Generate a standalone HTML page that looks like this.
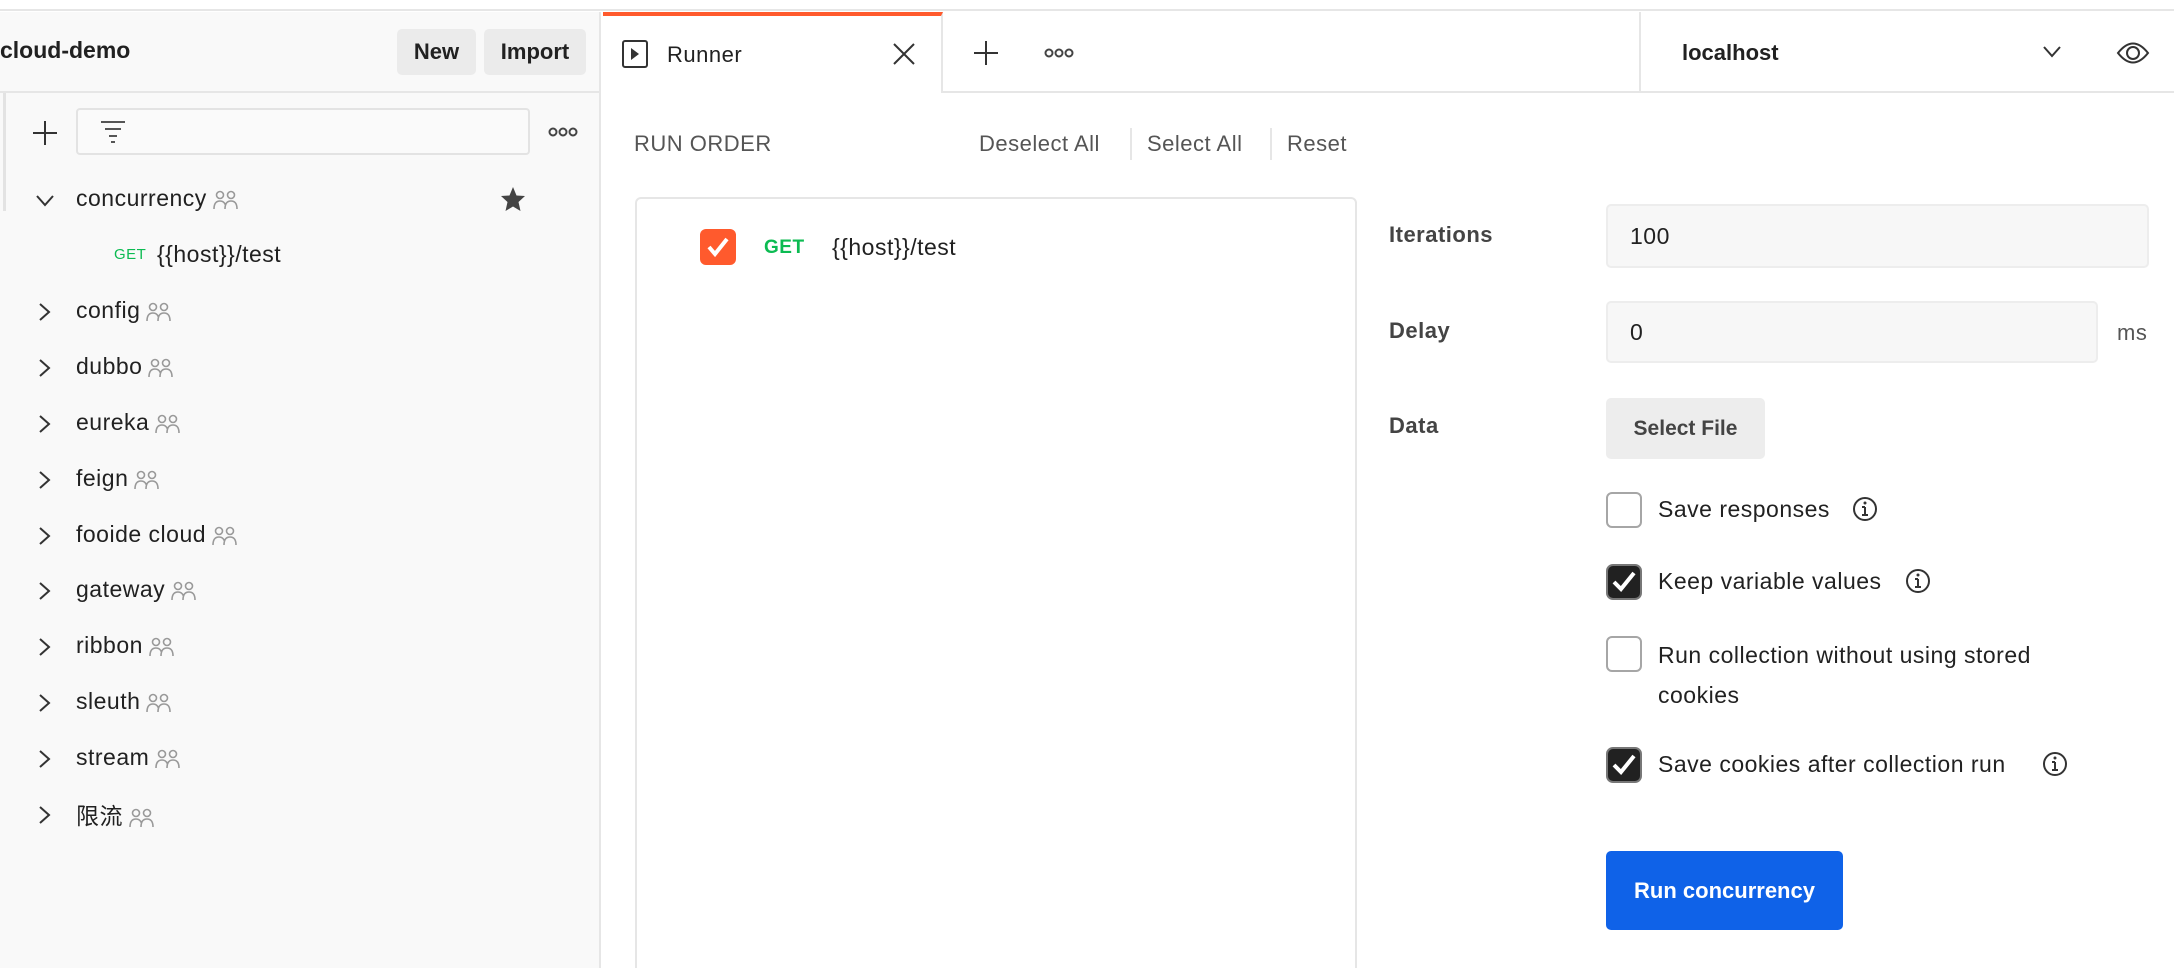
<!DOCTYPE html>
<html><head><meta charset="utf-8"><style>
*{box-sizing:border-box;margin:0;padding:0}
html,body{width:2174px;height:968px;overflow:hidden}
body{background:#fff;font-family:"Liberation Sans","Noto Sans CJK SC",sans-serif;color:#212121;position:relative;letter-spacing:0.5px}
.a{position:absolute}
.t{font-size:23px;white-space:nowrap}
.ppl{display:inline-block;vertical-align:middle;margin-left:6px}
</style></head><body>
<div class="a" style="left:0;top:0;width:2174px;height:11px;background:#fff;border-bottom:2px solid #e6e6e6"></div>
<div class="a" style="left:0;top:12px;width:601px;height:956px;background:#f9f9f9;border-right:2px solid #e6e6e6"></div>
<div class="a" style="left:0;top:91px;width:600px;height:2px;background:#e6e6e6"></div>
<div class="a" style="left:3px;top:93px;width:3px;height:118px;background:#e3e3e3"></div>
<div class="a t" style="left:0;top:37px;font-weight:bold;font-size:23px;letter-spacing:0">cloud-demo</div>
<div class="a" style="left:397px;top:29px;width:79px;height:46px;background:#ebebeb;border-radius:5px;font-weight:bold;font-size:22px;line-height:46px;text-align:center;letter-spacing:0">New</div>
<div class="a" style="left:484px;top:29px;width:102px;height:46px;background:#ebebeb;border-radius:5px;font-weight:bold;font-size:22px;line-height:46px;text-align:center;letter-spacing:0">Import</div>
<svg class="a" style="left:32px;top:120px" width="26" height="26"><path d="M13 1V25M1 13H25" stroke="#333" stroke-width="2"/></svg>
<div class="a" style="left:76px;top:108px;width:454px;height:47px;background:#fafafa;border:2px solid #e3e3e3;border-radius:4px"></div>
<svg class="a" style="left:100px;top:120px" width="26" height="24"><path d="M1 2H25M5 9H21M9 16H17M11 22H15" stroke="#555" stroke-width="2"/></svg>
<svg class="a" style="left:548px;top:126px" width="30" height="12"><g fill="none" stroke="#444" stroke-width="2"><circle cx="5" cy="6" r="3.5"/><circle cx="15" cy="6" r="3.5"/><circle cx="25" cy="6" r="3.5"/></g></svg>
<svg class="a" style="left:500px;top:186px" width="26" height="26"><path d="M13 1L16.5 9.5L25 10L18.5 16L20.5 25L13 20.5L5.5 25L7.5 16L1 10L9.5 9.5Z" fill="#444"/></svg>
<div id="tree"></div>
<div class="a" style="left:603px;top:12px;width:340px;height:81px;background:#fff;border-top:4px solid #ff5a2d;border-right:2px solid #e6e6e6"></div>
<div class="a" style="left:943px;top:91px;width:1231px;height:2px;background:#e6e6e6"></div>
<svg class="a" style="left:622px;top:40px" width="26" height="28"><rect x="1" y="1" width="24" height="26" rx="2" fill="none" stroke="#333" stroke-width="2"/><path d="M9 8L17 14L9 20Z" fill="#333"/></svg>
<div class="a t" style="left:667px;top:42px;font-size:22px">Runner</div>
<svg class="a" style="left:892px;top:42px" width="24" height="24"><path d="M2 2L22 22M22 2L2 22" stroke="#333" stroke-width="2"/></svg>
<svg class="a" style="left:973px;top:40px" width="26" height="26"><path d="M13 1V25M1 13H25" stroke="#333" stroke-width="2"/></svg>
<svg class="a" style="left:1044px;top:47px" width="30" height="12"><g fill="none" stroke="#444" stroke-width="2"><circle cx="5" cy="6" r="3.5"/><circle cx="15" cy="6" r="3.5"/><circle cx="25" cy="6" r="3.5"/></g></svg>
<div class="a" style="left:1639px;top:12px;width:2px;height:80px;background:#e6e6e6"></div>
<div class="a t" style="left:1682px;top:40px;font-weight:bold;font-size:22px;letter-spacing:0">localhost</div>
<svg class="a" style="left:2042px;top:45px" width="20" height="14"><path d="M2 2L10 11L18 2" fill="none" stroke="#333" stroke-width="2"/></svg>
<svg class="a" style="left:2116px;top:38px" width="34" height="30"><path d="M2 15Q17 -4 32 15Q17 34 2 15Z" fill="none" stroke="#333" stroke-width="2"/><circle cx="17" cy="15" r="6" fill="none" stroke="#333" stroke-width="2"/></svg>
<div class="a t" style="left:634px;top:131px;font-size:22px;color:#555">RUN ORDER</div>
<div class="a t" style="left:979px;top:131px;font-size:22px;color:#555">Deselect All</div>
<div class="a" style="left:1130px;top:128px;width:2px;height:32px;background:#e6e6e6"></div>
<div class="a t" style="left:1147px;top:131px;font-size:22px;color:#555">Select All</div>
<div class="a" style="left:1270px;top:128px;width:2px;height:32px;background:#e6e6e6"></div>
<div class="a t" style="left:1287px;top:131px;font-size:22px;color:#555">Reset</div>
<div class="a" style="left:635px;top:197px;width:722px;height:790px;border:2px solid #e6e6e6;border-radius:6px"></div>
<svg class="a" style="left:700px;top:229px" width="36" height="36"><rect width="36" height="36" rx="6" fill="#ff5a2d"/><path d="M9 18L15 25L27 10" fill="none" stroke="#fff" stroke-width="4"/></svg>
<div class="a" style="left:764px;top:237px;font-size:19px;font-weight:bold;color:#0cbb52">GET</div>
<div class="a t" style="left:832px;top:234px;font-size:23px">{{host}}/test</div>
<div class="a t" style="left:1389px;top:222px;font-size:22px;font-weight:bold;color:#444">Iterations</div>
<div class="a t" style="left:1389px;top:318px;font-size:22px;font-weight:bold;color:#444">Delay</div>
<div class="a t" style="left:1389px;top:413px;font-size:22px;font-weight:bold;color:#444">Data</div>
<div class="a" style="left:1606px;top:204px;width:543px;height:64px;background:#f7f7f7;border:2px solid #ededed;border-radius:5px;font-size:23px;line-height:60px;padding-left:22px">100</div>
<div class="a" style="left:1606px;top:301px;width:492px;height:62px;background:#f7f7f7;border:2px solid #ededed;border-radius:5px;font-size:23px;line-height:58px;padding-left:22px">0</div>
<div class="a t" style="left:2117px;top:320px;font-size:22px;color:#555">ms</div>
<div class="a" style="left:1606px;top:398px;width:159px;height:61px;background:#ededed;border-radius:5px;font-size:21px;font-weight:bold;color:#444;line-height:61px;text-align:center;letter-spacing:0">Select File</div>
<div class="a" style="left:1606px;top:492px;width:36px;height:36px;border:2px solid #a6a6a6;border-radius:6px;background:#fff"></div>
<div class="a t" style="left:1658px;top:496px">Save responses</div>
<svg class="a" style="left:1852px;top:496px" width="26" height="26"><circle cx="13" cy="13" r="11" fill="none" stroke="#333" stroke-width="2"/><path d="M13 11V19M10 19H16M10 11H13" stroke="#333" stroke-width="2"/><circle cx="13" cy="7" r="1.5" fill="#333"/></svg>
<svg class="a" style="left:1606px;top:564px" width="36" height="36"><rect x="1" y="1" width="34" height="34" rx="6" fill="#212121" stroke="#777" stroke-width="2"/><path d="M8 18L15 25L28 9" fill="none" stroke="#fff" stroke-width="4"/></svg>
<div class="a t" style="left:1658px;top:568px">Keep variable values</div>
<svg class="a" style="left:1905px;top:568px" width="26" height="26"><circle cx="13" cy="13" r="11" fill="none" stroke="#333" stroke-width="2"/><path d="M13 11V19M10 19H16M10 11H13" stroke="#333" stroke-width="2"/><circle cx="13" cy="7" r="1.5" fill="#333"/></svg>
<div class="a" style="left:1606px;top:636px;width:36px;height:36px;border:2px solid #a6a6a6;border-radius:6px;background:#fff"></div>
<div class="a" style="left:1658px;top:635px;font-size:23px;line-height:40px;width:420px">Run collection without using stored cookies</div>
<svg class="a" style="left:1606px;top:747px" width="36" height="36"><rect x="1" y="1" width="34" height="34" rx="6" fill="#212121" stroke="#777" stroke-width="2"/><path d="M8 18L15 25L28 9" fill="none" stroke="#fff" stroke-width="4"/></svg>
<div class="a t" style="left:1658px;top:751px">Save cookies after collection run</div>
<svg class="a" style="left:2042px;top:751px" width="26" height="26"><circle cx="13" cy="13" r="11" fill="none" stroke="#333" stroke-width="2"/><path d="M13 11V19M10 19H16M10 11H13" stroke="#333" stroke-width="2"/><circle cx="13" cy="7" r="1.5" fill="#333"/></svg>
<div class="a" style="left:1606px;top:851px;width:237px;height:79px;background:#0f62e8;border-radius:5px;color:#fff;font-weight:bold;font-size:22px;line-height:79px;text-align:center;letter-spacing:0">Run concurrency</div>
<script>
var ppl='<svg class="ppl" width="26" height="20" viewBox="0 0 26 20"><g fill="none" stroke="#999" stroke-width="1.6"><circle cx="7" cy="5" r="3.5"/><circle cx="18" cy="5" r="3.5"/><path d="M1 19Q1 11 7 11Q11 11 12.5 15M12 19Q12 11 18 11Q24 11 24 19"/></g></svg>';
var items=["concurrency","config","dubbo","eureka","feign","fooide cloud","gateway","ribbon","sleuth","stream","限流"];
var h='';var ys=[200,312,368,424,480,536,591,647,703,759,815];
items.forEach(function(n,i){var y=ys[i];
 h+= i==0?'<svg class="a" style="left:35px;top:'+(y-6)+'px" width="20" height="14"><path d="M2 2L10 11L18 2" fill="none" stroke="#333" stroke-width="2"/></svg>':'<svg class="a" style="left:38px;top:'+(y-10)+'px" width="14" height="20"><path d="M2 2L11 10L2 18" fill="none" stroke="#333" stroke-width="2"/></svg>';
 h+='<div class="a t" style="left:76px;top:'+(y-15-(i==10?3:0))+'px">'+n+ppl+'</div>';});
h+='<div class="a" style="left:114px;top:246px;font-size:15px;color:#0cbb52">GET</div><div class="a t" style="left:157px;top:241px">{{host}}/test</div>';
document.getElementById('tree').innerHTML=h;
</script>
</body></html>
